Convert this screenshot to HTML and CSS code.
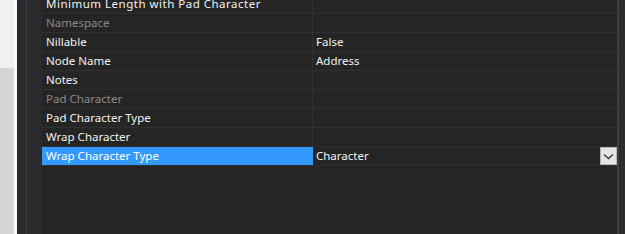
FILE: index.html
```html
<!DOCTYPE html>
<html>
<head>
  <meta charset="utf-8">
  <link rel="stylesheet" href="styles.css">
</head>
<body>
  <div class="side">
    <div class="side-top"></div>
    <div class="side-bottom"></div>
  </div>
  <div class="strip"></div>
  <div class="frame"></div>

  <div class="grid">
    <div class="gutter"></div>
    <div class="rows">
      <div class="row">
        <div class="name wide">Minimum Length with Pad Character</div>
        <div class="value"></div>
      </div>
      <div class="row">
        <div class="name muted">Namespace</div>
        <div class="value"></div>
      </div>
      <div class="row">
        <div class="name">Nillable</div>
        <div class="value">False</div>
      </div>
      <div class="row">
        <div class="name">Node Name</div>
        <div class="value">Address</div>
      </div>
      <div class="row">
        <div class="name">Notes</div>
        <div class="value"></div>
      </div>
      <div class="row">
        <div class="name muted">Pad Character</div>
        <div class="value"></div>
      </div>
      <div class="row">
        <div class="name">Pad Character Type</div>
        <div class="value"></div>
      </div>
      <div class="row">
        <div class="name">Wrap Character</div>
        <div class="value"></div>
      </div>
      <div class="row selected">
        <div class="name">Wrap Character Type</div>
        <div class="value">
          <span>Character</span>
          <div class="drop">
            <svg width="11" height="7" viewBox="0 0 11 7">
              <path d="M1 1.5 L5.5 5.5 L10 1.5" fill="none" stroke="#3c3c3c" stroke-width="1.4"/>
            </svg>
          </div>
        </div>
      </div>
    </div>
  </div>

  <div class="edge"></div>
</body>
</html>
```

FILE: styles.css
```css
html, body {
  margin: 0;
  height: 100%;
}

body {
  width: 625px;
  height: 234px;
  overflow: hidden;
  display: flex;
  background: #252526;
  font-family: 'Segoe UI', 'Noto Sans', sans-serif;
  font-size: 11.5px;
  color: #f1f1f1;
}

.side {
  width: 14px;
  display: flex;
  flex-direction: column;
}

.side-top {
  height: 68px;
  background: #f0f0f0;
}

.side-bottom {
  flex: 1;
  background: #d4d4d4;
}

.strip {
  width: 3px;
  background: #fafafa;
}

.frame {
  width: 9px;
  background: #2b2b2d;
  border-right: 1px solid #3e3e42;
}

.grid {
  flex: 1;
  display: flex;
}

.gutter {
  width: 15px;
  background: #2a2a2c;
}

.rows {
  flex: 1;
  margin-top: -5px;
}

.row {
  display: flex;
  height: 18px;
  line-height: 18px;
  border-bottom: 1px solid #303031;
}

.name {
  width: 266px;
  padding-left: 4px;
  border-right: 1px solid #303031;
  white-space: nowrap;
  overflow: hidden;
}

.name.wide {
  letter-spacing: 0.5px;
}

.name.muted {
  color: #8a8a8a;
}

.value {
  flex: 1;
  padding-left: 3px;
  display: flex;
  justify-content: space-between;
}

.selected .name {
  background: #3399ff;
  color: #ffffff;
  border-right-color: #3399ff;
}

.drop {
  width: 15px;
  height: 16px;
  background: #e5e5e5;
  border: 1px solid #b4b4b4;
  display: flex;
  align-items: center;
  justify-content: center;
}

.edge {
  width: 6px;
  background: #2d2d30;
  border-left: 2px solid #3e3e42;
}
```
